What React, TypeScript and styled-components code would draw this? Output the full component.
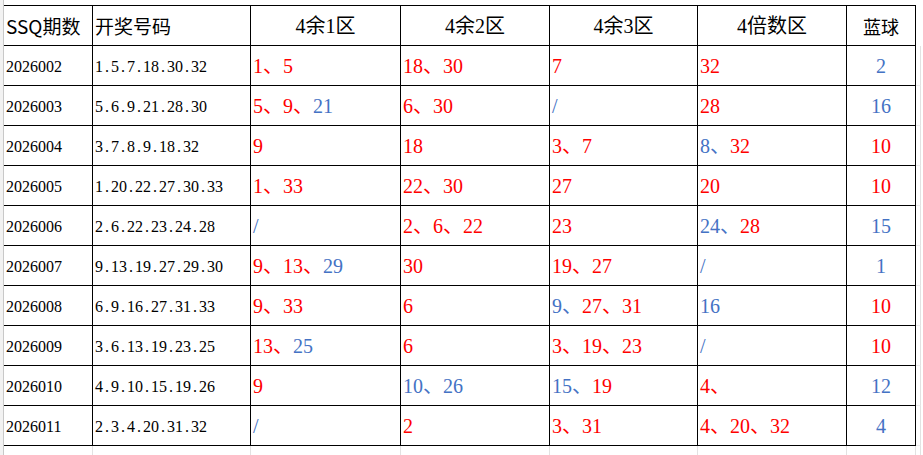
import React from "react";
import styled, { createGlobalStyle } from "styled-components";

const GlobalStyle = createGlobalStyle`
  html, body { margin: 0; padding: 0; background: #ffffff; }
  #root { width: 923px; height: 455px; overflow: hidden; }
`;

type Tone = "r" | "b";
type Seg = [string, Tone];

const toneColor: Record<Tone, string> = { r: "#ff0000", b: "#4472c4" };

const Page = styled.div`
  display: flex;
  width: 923px;
  height: 455px;
  overflow: hidden;
  background: #fff;
`;

const Gutter = styled.div`
  width: 3px;
  flex: none;
  background: #f2f2f2;
  border-right: 1px solid #c8c8c8;
`;

const Sheet = styled.div`
  padding-top: 5px;
  flex: none;
`;

const Table = styled.div`
  display: grid;
  grid-template-columns: 89px 158px 150px 149px 148px 149px 69px 5px;
  grid-template-rows: 41px repeat(10, 40px) 20px;
`;

const Cell = styled.div<{ $align?: "left" | "center"; $lift?: number }>`
  box-sizing: border-box;
  border-right: 1px solid #000;
  border-bottom: 1px solid #000;
  display: flex;
  align-items: center;
  justify-content: ${(p) => (p.$align === "center" ? "center" : "flex-start")};
  padding: ${(p) => p.$lift ?? 0}px 2px 0 2px;
  overflow: hidden;
  white-space: nowrap;
`;

const HeadCell = styled(Cell)`
  border-top: 1px solid #000;
  color: #000;
`;

const EdgeCell = styled.div<{ $top?: boolean }>`
  box-sizing: border-box;
  border-right: 1px solid #e2e2e2;
  border-bottom: 1px solid #ebebeb;
`;

const FillCell = styled.div`
  box-sizing: border-box;
  border-right: 1px solid #e2e2e2;
`;

const SansHead = styled.span`
  font-family: "Noto Sans CJK SC", "Noto Sans", sans-serif;
  font-size: 19px;
  line-height: 20px;
`;

const SerifHead = styled.span`
  font-family: "Liberation Serif", "Noto Sans CJK SC", serif;
  font-size: 20px;
  line-height: 20px;
`;

const BallHead = styled.span`
  font-family: "Noto Sans CJK SC", sans-serif;
  font-size: 18px;
  line-height: 20px;
`;

const PlainText = styled.span`
  font-family: "Liberation Serif", "Noto Sans CJK SC", serif;
  font-size: 16px;
  line-height: 16px;
  color: #000;
`;

const Dot = styled.span`
  display: inline-block;
  width: 8px;
  text-align: center;
`;

const Colored = styled.span`
  font-family: "Liberation Serif", "Noto Sans CJK SC", serif;
  font-size: 20px;
  line-height: 20px;
`;

const Part = styled.span<{ $tone: Tone }>`
  color: ${(p) => toneColor[p.$tone]};
`;

interface Row {
  id: string;
  draw: string;
  zones: Seg[][];
  blue: Seg;
}

const rows: Row[] = [
  { id: "2026002", draw: "1.5.7.18.30.32", zones: [[["1、5", "r"]], [["18、30", "r"]], [["7", "r"]], [["32", "r"]]], blue: ["2", "b"] },
  { id: "2026003", draw: "5.6.9.21.28.30", zones: [[["5、9、", "r"], ["21", "b"]], [["6、30", "r"]], [["/", "b"]], [["28", "r"]]], blue: ["16", "b"] },
  { id: "2026004", draw: "3.7.8.9.18.32", zones: [[["9", "r"]], [["18", "r"]], [["3、7", "r"]], [["8、", "b"], ["32", "r"]]], blue: ["10", "r"] },
  { id: "2026005", draw: "1.20.22.27.30.33", zones: [[["1、33", "r"]], [["22、30", "r"]], [["27", "r"]], [["20", "r"]]], blue: ["10", "r"] },
  { id: "2026006", draw: "2.6.22.23.24.28", zones: [[["/", "b"]], [["2、6、22", "r"]], [["23", "r"]], [["24、", "b"], ["28", "r"]]], blue: ["15", "b"] },
  { id: "2026007", draw: "9.13.19.27.29.30", zones: [[["9、13、", "r"], ["29", "b"]], [["30", "r"]], [["19、27", "r"]], [["/", "b"]]], blue: ["1", "b"] },
  { id: "2026008", draw: "6.9.16.27.31.33", zones: [[["9、33", "r"]], [["6", "r"]], [["9、", "b"], ["27、31", "r"]], [["16", "b"]]], blue: ["10", "r"] },
  { id: "2026009", draw: "3.6.13.19.23.25", zones: [[["13、", "r"], ["25", "b"]], [["6", "r"]], [["3、19、23", "r"]], [["/", "b"]]], blue: ["10", "r"] },
  { id: "2026010", draw: "4.9.10.15.19.26", zones: [[["9", "r"]], [["10、26", "b"]], [["15、", "b"], ["19", "r"]], [["4、", "r"]]], blue: ["12", "b"] },
  { id: "2026011", draw: "2.3.4.20.31.32", zones: [[["/", "b"]], [["2", "r"]], [["3、31", "r"]], [["4、20、32", "r"]]], blue: ["4", "b"] },
];

const DrawNumbers: React.FC<{ value: string }> = ({ value }) => {
  const parts = value.split(".");
  return (
    <PlainText>
      {parts.map((p, i) => (
        <React.Fragment key={i}>
          {i > 0 && <Dot>.</Dot>}
          {p}
        </React.Fragment>
      ))}
    </PlainText>
  );
};

const Segments: React.FC<{ segs: Seg[] }> = ({ segs }) => (
  <Colored>
    {segs.map(([t, tone], i) => (
      <Part key={i} $tone={tone}>
        {t}
      </Part>
    ))}
  </Colored>
);

const zoneTitles = ["4余1区", "4余2区", "4余3区", "4倍数区"];

export default function App() {
  return (
    <>
      <GlobalStyle />
      <Page>
        <Gutter />
        <Sheet>
          <Table>
            <HeadCell $lift={1}>
              <SansHead>SSQ期数</SansHead>
            </HeadCell>
            <HeadCell $lift={1}>
              <SansHead>开奖号码</SansHead>
            </HeadCell>
            {zoneTitles.map((t) => (
              <HeadCell key={t} $align="center" $lift={1}>
                <SerifHead>{t}</SerifHead>
              </HeadCell>
            ))}
            <HeadCell $align="center" $lift={1}>
              <BallHead>蓝球</BallHead>
            </HeadCell>
            <div />
            {rows.map((r) => (
              <React.Fragment key={r.id}>
                <Cell $lift={3}>
                  <PlainText>{r.id}</PlainText>
                </Cell>
                <Cell $lift={3}>
                  <DrawNumbers value={r.draw} />
                </Cell>
                {r.zones.map((z, i) => (
                  <Cell key={i} $lift={1}>
                    <Segments segs={z} />
                  </Cell>
                ))}
                <Cell $align="center" $lift={1}>
                  <Segments segs={[r.blue]} />
                </Cell>
                <EdgeCell />
              </React.Fragment>
            ))}
            {Array.from({ length: 8 }).map((_, i) => (
              <FillCell key={i} />
            ))}
          </Table>
        </Sheet>
      </Page>
    </>
  );
}
